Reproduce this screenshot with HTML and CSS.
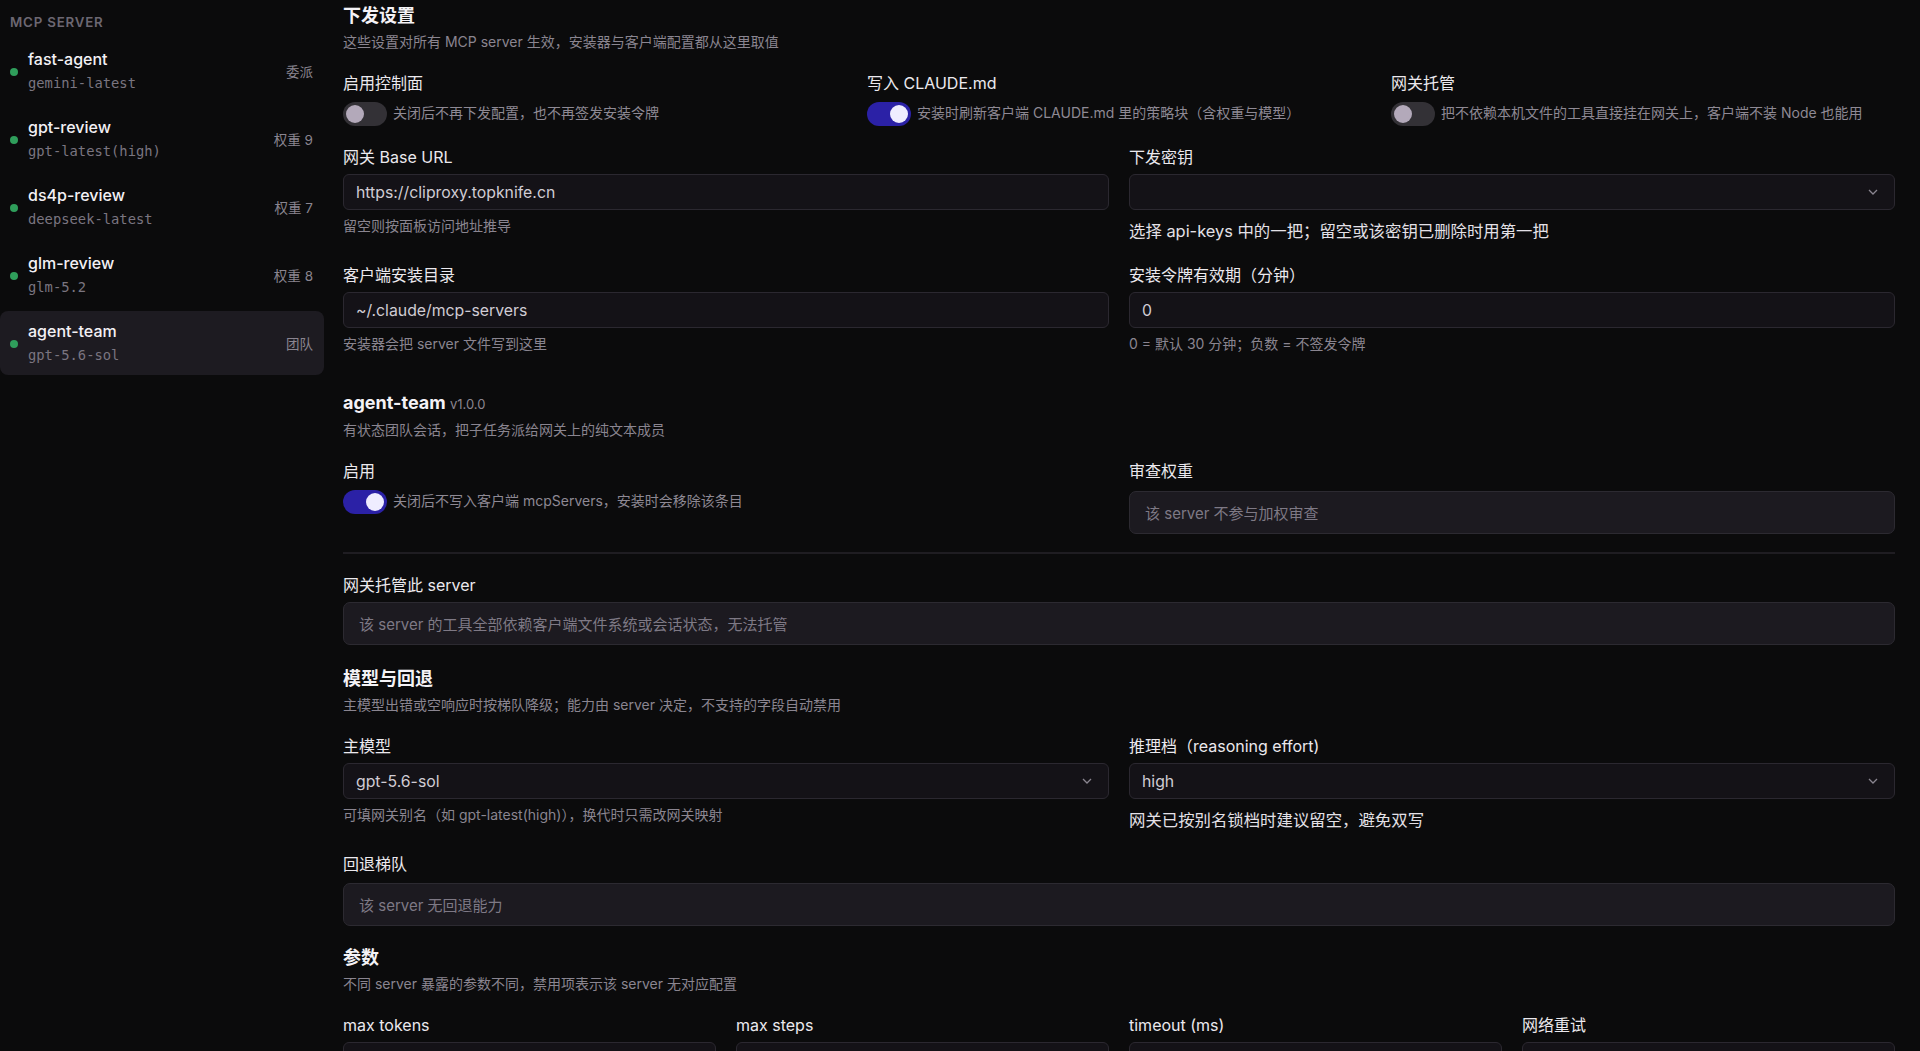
FILE: index.html
```html
<!doctype html>
<html lang="zh-CN">
<head>
    <meta charset="UTF-8">
    <meta name="viewport" content="width=device-width, initial-scale=1.0">
    <title>MCP Server - 下发设置</title>
    <link rel="stylesheet" href="styles.css">
</head>
<body>
    <div id="layout">
        <aside id="sidebar">
            <div class="side_title">MCP SERVER</div>
            <ul class="server_list">
                <li class="server_item">
                    <span class="status_dot"></span>
                    <div class="server_text">
                        <div class="server_name">fast-agent</div>
                        <div class="server_model">gemini-latest</div>
                    </div>
                    <span class="server_tag">委派</span>
                </li>
                <li class="server_item">
                    <span class="status_dot"></span>
                    <div class="server_text">
                        <div class="server_name">gpt-review</div>
                        <div class="server_model">gpt-latest(high)</div>
                    </div>
                    <span class="server_tag">权重 9</span>
                </li>
                <li class="server_item">
                    <span class="status_dot"></span>
                    <div class="server_text">
                        <div class="server_name">ds4p-review</div>
                        <div class="server_model">deepseek-latest</div>
                    </div>
                    <span class="server_tag">权重 7</span>
                </li>
                <li class="server_item">
                    <span class="status_dot"></span>
                    <div class="server_text">
                        <div class="server_name">glm-review</div>
                        <div class="server_model">glm-5.2</div>
                    </div>
                    <span class="server_tag">权重 8</span>
                </li>
                <li class="server_item active">
                    <span class="status_dot"></span>
                    <div class="server_text">
                        <div class="server_name">agent-team</div>
                        <div class="server_model">gpt-5.6-sol</div>
                    </div>
                    <span class="server_tag">团队</span>
                </li>
            </ul>
        </aside>

        <main id="content">
            <!-- global settings -->
            <section class="block">
                <h2>下发设置</h2>
                <p class="block_desc">这些设置对所有 MCP server 生效，安装器与客户端配置都从这里取值</p>

                <div class="grid cols-3 block_body">
                    <div class="field">
                        <label>启用控制面</label>
                        <div class="toggle_row">
                            <span class="toggle"><span class="knob"></span></span>
                            <span class="toggle_desc">关闭后不再下发配置，也不再签发安装令牌</span>
                        </div>
                    </div>
                    <div class="field">
                        <label>写入 CLAUDE.md</label>
                        <div class="toggle_row">
                            <span class="toggle on"><span class="knob"></span></span>
                            <span class="toggle_desc">安装时刷新客户端 CLAUDE.md 里的策略块（含权重与模型）</span>
                        </div>
                    </div>
                    <div class="field">
                        <label>网关托管</label>
                        <div class="toggle_row">
                            <span class="toggle"><span class="knob"></span></span>
                            <span class="toggle_desc">把不依赖本机文件的工具直接挂在网关上，客户端不装 Node 也能用</span>
                        </div>
                    </div>
                </div>

                <div class="grid cols-2 form_rows">
                    <div class="field">
                        <label for="base_url">网关 Base URL</label>
                        <input type="text" id="base_url" class="text_input" value="https://cliproxy.topknife.cn">
                        <p class="help">留空则按面板访问地址推导</p>
                    </div>
                    <div class="field">
                        <label>下发密钥</label>
                        <div class="select_box">
                            <span></span>
                            <svg class="chevron" width="10" height="6" viewBox="0 0 10 6"><path d="M1 1l4 4 4-4" /></svg>
                        </div>
                        <p class="help strong">选择 api-keys 中的一把；留空或该密钥已删除时用第一把</p>
                    </div>
                    <div class="field">
                        <label for="install_dir">客户端安装目录</label>
                        <input type="text" id="install_dir" class="text_input" value="~/.claude/mcp-servers">
                        <p class="help">安装器会把 server 文件写到这里</p>
                    </div>
                    <div class="field">
                        <label for="token_ttl">安装令牌有效期（分钟）</label>
                        <input type="text" id="token_ttl" class="text_input" value="0">
                        <p class="help">0 = 默认 30 分钟；负数 = 不签发令牌</p>
                    </div>
                </div>
            </section>

            <!-- selected server -->
            <section class="block server_block">
                <h2>agent-team <span class="version">v1.0.0</span></h2>
                <p class="block_desc">有状态团队会话，把子任务派给网关上的纯文本成员</p>

                <div class="grid cols-2 block_body">
                    <div class="field">
                        <label>启用</label>
                        <div class="toggle_row">
                            <span class="toggle on"><span class="knob"></span></span>
                            <span class="toggle_desc">关闭后不写入客户端 mcpServers，安装时会移除该条目</span>
                        </div>
                    </div>
                    <div class="field">
                        <label>审查权重</label>
                        <div class="note_box">该 server 不参与加权审查</div>
                    </div>
                </div>

                <hr class="divider">

                <div class="field hosted">
                    <label>网关托管此 server</label>
                    <div class="note_box">该 server 的工具全部依赖客户端文件系统或会话状态，无法托管</div>
                </div>
            </section>

            <section class="block">
                <h2>模型与回退</h2>
                <p class="block_desc">主模型出错或空响应时按梯队降级；能力由 server 决定，不支持的字段自动禁用</p>

                <div class="grid cols-2 block_body form_rows">
                    <div class="field">
                        <label>主模型</label>
                        <div class="select_box">
                            <span>gpt-5.6-sol</span>
                            <svg class="chevron" width="10" height="6" viewBox="0 0 10 6"><path d="M1 1l4 4 4-4" /></svg>
                        </div>
                        <p class="help">可填网关别名（如 gpt-latest(high)），换代时只需改网关映射</p>
                    </div>
                    <div class="field">
                        <label>推理档（reasoning effort)</label>
                        <div class="select_box">
                            <span>high</span>
                            <svg class="chevron" width="10" height="6" viewBox="0 0 10 6"><path d="M1 1l4 4 4-4" /></svg>
                        </div>
                        <p class="help strong">网关已按别名锁档时建议留空，避免双写</p>
                    </div>
                    <div class="field wide">
                        <label>回退梯队</label>
                        <div class="note_box">该 server 无回退能力</div>
                    </div>
                </div>
            </section>

            <section class="block">
                <h2>参数</h2>
                <p class="block_desc">不同 server 暴露的参数不同，禁用项表示该 server 无对应配置</p>

                <div class="grid cols-4 block_body">
                    <div class="field">
                        <label>max tokens</label>
                        <input type="text" class="text_input" value="">
                    </div>
                    <div class="field">
                        <label>max steps</label>
                        <input type="text" class="text_input" value="">
                    </div>
                    <div class="field">
                        <label>timeout (ms)</label>
                        <input type="text" class="text_input" value="">
                    </div>
                    <div class="field">
                        <label>网络重试</label>
                        <input type="text" class="text_input" value="">
                    </div>
                </div>
            </section>
        </main>
    </div>
</body>
</html>
```

FILE: styles.css
```css
html, body {
    height: 100%;
}

body {
    font-family: 'Inter', 'Noto Sans CJK SC', sans-serif;
    margin: 0;
    padding: 0;
    background: #0b0b0c;
    color: #ebe9ee;
    overflow: hidden;
}

#layout {
    display: grid;
    grid-template-columns: 324px 1fr;
    height: 100vh;
}

/* sidebar */

#sidebar {
    padding-top: 14px;
}

.side_title {
    padding-left: 10px;
    font-size: 13.3px;
    line-height: 16px;
    font-weight: 600;
    letter-spacing: 0.06em;
    color: #6c6772;
}

.server_list {
    list-style: none;
    margin: 9px 0 0;
    padding: 0;
    display: flex;
    flex-direction: column;
    gap: 4px;
}

.server_item {
    display: flex;
    align-items: center;
    gap: 10px;
    height: 64px;
    box-sizing: border-box;
    padding: 0 11px 0 10px;
    border-radius: 8px;
}

.server_item.active {
    background: #1d1b21;
}

.status_dot {
    width: 8px;
    height: 8px;
    border-radius: 50%;
    background: #2f9e5b;
    flex-shrink: 0;
    margin-top: 2px;
}

.server_text {
    display: flex;
    flex-direction: column;
    gap: 4px;
}

.server_name {
    font-size: 16px;
    line-height: 20px;
    font-weight: 500;
    color: #f3f1f5;
}

.server_model {
    font-family: 'DejaVu Sans Mono', monospace;
    font-size: 13.8px;
    line-height: 20px;
    color: #7a7580;
}

.server_tag {
    margin-left: auto;
    font-size: 13.5px;
    color: #8a8590;
}

/* main panel */

#content {
    padding: 4px 25px 0 19px;
    overflow: hidden;
}

.block + .block {
    margin-top: 20px;
}

.block.server_block {
    margin-top: 38px;
}

.server_block + .block {
    margin-top: 22px;
}

h2 {
    margin: 0;
    font-size: 18px;
    line-height: 24px;
    font-weight: 700;
    color: #f4f2f6;
}

.version {
    font-size: 13px;
    font-weight: 400;
    color: #8a8590;
}

.block_desc {
    margin: 5px 0 0;
    font-size: 14px;
    line-height: 18px;
    color: #8a8590;
}

.block_body {
    margin-top: 22px;
}

.grid {
    display: grid;
    column-gap: 20px;
    row-gap: 22px;
    align-items: start;
}

.cols-2 { grid-template-columns: repeat(2, 1fr); }
.cols-3 { grid-template-columns: repeat(3, 1fr); }
.cols-4 { grid-template-columns: repeat(4, 1fr); }

.cols-3 + .form_rows {
    margin-top: 21px;
}

.field {
    display: flex;
    flex-direction: column;
    min-width: 0;
}

.field.wide {
    grid-column: 1 / -1;
}

.field label {
    font-size: 16px;
    line-height: 20px;
    color: #ebe9ee;
    margin-bottom: 7px;
}

.text_input,
.select_box {
    height: 36px;
    box-sizing: border-box;
    width: 100%;
    margin: 0;
    padding: 0 12px;
    font-family: inherit;
    font-size: 15.8px;
    color: #d0ccd4;
    background: #141217;
    border: 1px solid #2b2830;
    border-radius: 6px;
    outline: none;
}

.select_box {
    display: flex;
    align-items: center;
    justify-content: space-between;
    padding-right: 16px;
}

.chevron path {
    fill: none;
    stroke: #8a8590;
    stroke-width: 1.3;
}

.help {
    margin: 7px 0 0;
    font-size: 14px;
    line-height: 18px;
    color: #8a8590;
}

.help.strong {
    margin-top: 9px;
    font-size: 16.4px;
    line-height: 24px;
    color: #e4e1e7;
}

/* switches */

.toggle_row {
    display: flex;
    align-items: center;
    gap: 6px;
    margin-top: 2px;
}

.toggle {
    width: 44px;
    height: 24px;
    box-sizing: border-box;
    padding: 3px;
    border-radius: 12px;
    background: #333136;
    display: flex;
    justify-content: flex-start;
    flex-shrink: 0;
}

.toggle .knob {
    width: 18px;
    height: 18px;
    border-radius: 50%;
    background: #b3a9ba;
}

.toggle.on {
    background: #2b21a6;
    justify-content: flex-end;
}

.toggle.on .knob {
    background: #efedff;
}

.toggle_desc {
    font-size: 14px;
    line-height: 18px;
    margin-top: -3px;
    color: #8e8994;
    white-space: nowrap;
}

/* read-only info boxes */

.note_box {
    margin-top: 3px;
    height: 43px;
    box-sizing: border-box;
    padding: 0 15px;
    display: flex;
    align-items: center;
    font-size: 15px;
    color: #7e7985;
    background: #1c1a20;
    border: 1px solid #2c2a31;
    border-radius: 7px;
}

.divider {
    margin: 18px 0 0;
    border: none;
    border-top: 2px solid #1f1d22;
}

.field.hosted {
    margin-top: 21px;
}

.field.hosted .note_box {
    margin-top: 0;
}

.form_rows .note_box {
    margin-top: 2px;
}
```
